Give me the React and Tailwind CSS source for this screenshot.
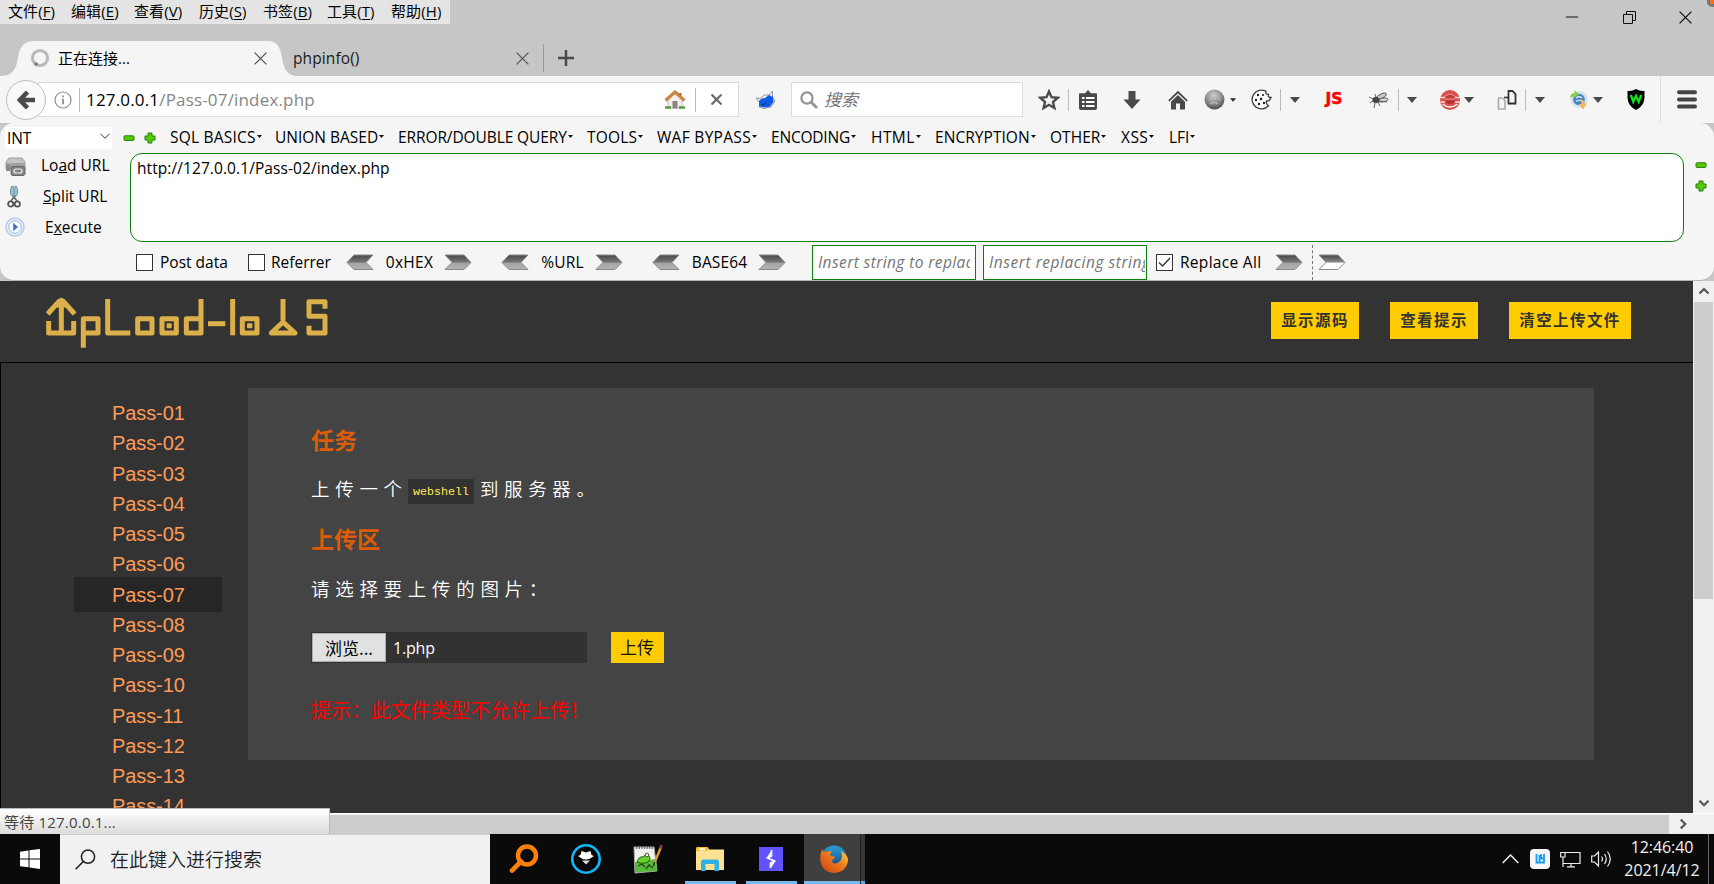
import React from "react";

const UI = "font-['Open_Sans','Noto_Sans_CJK_SC',sans-serif]";

/* ---------- small helpers ---------- */
function Cell({ w, children, className = "" }) {
  return (
    <div className={`flex shrink-0 items-center justify-center ${w} ${className}`}>{children}</div>
  );
}

function Tri({ w = 10, h = 6, color = "#4a4a4a" }) {
  return (
    <svg width={w} height={h} viewBox="0 0 10 6" className="shrink-0">
      <path d="M0 0H10L5 6Z" fill={color} />
    </svg>
  );
}

function CloseX({ size = 13, color = "#555", sw = 1.3 }) {
  return (
    <svg width={size} height={size} viewBox="0 0 13 13">
      <path d="M.6 .6L12.4 12.4M12.4 .6L.6 12.4" stroke={color} strokeWidth={sw} fill="none" />
    </svg>
  );
}

function Minus() {
  return (
    <svg width="12" height="12" viewBox="0 0 12 12">
      <rect x="1" y="3.8" width="10" height="4.6" rx="1" fill="#55cc00" stroke="#2b7d0c" />
    </svg>
  );
}

function Plus() {
  return (
    <svg width="12" height="12" viewBox="0 0 12 12">
      <path d="M4 1H8V4H11V8H8V11H4V8H1V4H4Z" fill="#55cc00" stroke="#2b7d0c" strokeLinejoin="round" />
    </svg>
  );
}

function ArrowDefs() {
  return (
    <svg width="0" height="0" className="absolute">
      <defs>
        <linearGradient id="arrowGray" x1="0" y1="0" x2="0" y2="1">
          <stop offset="0" stopColor="#484848" />
          <stop offset=".5" stopColor="#777" />
          <stop offset=".55" stopColor="#a4a4a4" />
          <stop offset="1" stopColor="#b2b2b2" />
        </linearGradient>
        <linearGradient id="arrowWhite" x1="0" y1="0" x2="0" y2="1">
          <stop offset="0" stopColor="#444" />
          <stop offset=".48" stopColor="#8a8a8a" />
          <stop offset=".56" stopColor="#fff" />
          <stop offset="1" stopColor="#fff" />
        </linearGradient>
      </defs>
    </svg>
  );
}

function Arrow({ left, white }) {
  return (
    <svg width="28" height="17" viewBox="0 0 28 17" className="shrink-0">
      <path
        d={left ? "M27 1H8L1 8.5L8 15.5H27L20 8.5Z" : "M1 1H20L27 8.5L20 15.5H1L8 8.5Z"}
        fill={white ? "url(#arrowWhite)" : "url(#arrowGray)"}
        stroke="#8a8a8a"
      />
    </svg>
  );
}

function Box({ checked }) {
  return (
    <div className="flex size-[17px] shrink-0 items-center justify-center border border-[#333] bg-white">
      {checked && (
        <svg width="13" height="11" viewBox="0 0 13 11">
          <path d="M1 5.5L4.6 9L12 1" stroke="#333" strokeWidth="1.4" fill="none" />
        </svg>
      )}
    </div>
  );
}

/* ---------- title bar with menus and tabs ---------- */
const MENUS = [
  ["文件", "F", "w-[63px]"],
  ["编辑", "E", "w-[63px]"],
  ["查看", "V", "w-[65px]"],
  ["历史", "S", "w-[64px]"],
  ["书签", "B", "w-[64px]"],
  ["工具", "T", "w-[64px]"],
  ["帮助", "H", "w-[59px]"],
];

function TitleBar() {
  return (
    <div className="flex h-[76px] flex-col bg-[#c6c6c6]">
      <div className="flex h-[40px] items-start justify-between">
        <div className="flex h-6 w-[450px] items-center bg-[#e4e4e4] pl-2 text-[15px] text-black">
          {MENUS.map(([t, k, w]) => (
            <div key={k} className={`${w} shrink-0 whitespace-nowrap pb-[2px] leading-[22px] tracking-[0.1px]`}>
              {t}(<span className="underline underline-offset-2">{k}</span>)
            </div>
          ))}
        </div>
        <div className="-mr-px flex h-[34px] items-center">
          <Cell w="w-[58px]">
            <svg width="12" height="2"><path d="M0 1H12" stroke="#111" /></svg>
          </Cell>
          <Cell w="w-[56px]">
            <svg width="13" height="13" viewBox="0 0 13 13" fill="none" stroke="#111">
              <path d="M.5 3.5H9.5V12.5H.5Z M3.5 3.5V.5H12.5V9.5H9.5" />
            </svg>
          </Cell>
          <Cell w="w-[50px]" className="pl-[6px]"><CloseX color="#111" /></Cell>
          <div className="h-[34px] w-[8px]">
            <svg width="7" height="8" viewBox="0 0 7 8">
              <path d="M0 0V3Q1 7 7 7V0Z" fill="#777" />
              <path d="M3 0V4H7V0Z" fill="#f37021" />
            </svg>
          </div>
        </div>
      </div>
      <div className="flex h-[36px]">
        <div className="relative h-[36px] w-[298px]">
          <svg width="298" height="36" viewBox="0 0 298 36" className="absolute inset-0">
            <path
              d="M0 36C12 36 16 30 18 18C20 6 24 1 34 1H267C277 1 280 6 282 18C284 30 288 36 298 36Z"
              fill="#f5f5f5"
            />
          </svg>
          <div className="relative flex h-[36px] items-center text-[15px] text-black">
            <Cell w="w-[22px]" className="ml-[29px]">
              <svg width="20" height="20" viewBox="0 0 20 20">
                <circle cx="10" cy="10" r="7.6" fill="none" stroke="#b9b9b9" strokeWidth="3" />
                <circle cx="6" cy="16" r="1.7" fill="#777" />
              </svg>
            </Cell>
            <div className="ml-[7px] w-[188px]">正在连接...</div>
            <Cell w="w-[28px]"><CloseX /></Cell>
          </div>
        </div>
        <div className="flex items-center text-[15.5px] text-[#1a1a1a]">
          <div className="-ml-[5px] w-[216px] pt-[2px] tracking-[0.1px]">phpinfo()</div>
          <Cell w="w-[26px]"><CloseX /></Cell>
          <div className="ml-[8px] h-[28px] w-px bg-[#999]" />
          <Cell w="w-[44px]">
            <svg width="16" height="16"><path d="M8 0V16M0 8H16" stroke="#4a4a4a" strokeWidth="2.5" /></svg>
          </Cell>
        </div>
      </div>
    </div>
  );
}

/* ---------- navigation bar ---------- */
function Sep({ h = "h-[22px]" }) {
  return <div className={`w-px shrink-0 bg-[#bdbdbd] ${h}`} />;
}

function NavBar() {
  return (
    <div className="flex h-[47px] items-center bg-[#f5f5f5]">
      <div className="relative z-10 ml-[6px] flex size-10 shrink-0 items-center justify-center rounded-full border border-[#bcbcbc] bg-[#fafafa]">
        <svg width="18" height="20" viewBox="0 0 18 20">
          <path d="M10.5 2L3 10L10.5 18M3.5 10H18" stroke="#4a4a4a" strokeWidth="4.6" fill="none" />
        </svg>
      </div>
      <div className="-ml-[8px] flex h-[35px] w-[701px] shrink-0 items-center border border-[#dcdcdc] bg-white pl-[15px]">
        <svg width="18" height="18" viewBox="0 0 18 18" fill="none" stroke="#8f8f8f">
          <circle cx="9" cy="9" r="8" strokeWidth="1.2" />
          <path d="M9 7.8V13.2" strokeWidth="1.8" />
          <path d="M9 4.5V6.3" strokeWidth="1.8" />
        </svg>
        <div className="ml-[7px]"><Sep h="h-[24px]" /></div>
        <div className="ml-[6px] w-[575px] text-[17px] tracking-[0.17px] text-[#858585]">
          <span className="text-black">127.0.0.1</span>/Pass-07/index.php
        </div>
        <Cell w="w-[28px]">
          <svg width="22" height="20" viewBox="0 0 22 20">
            <path d="M4 9.5L11 3L18 9.5V18H4Z" fill="#f1efed" stroke="#aaa" strokeWidth=".7" />
            <path d="M15 3H17.5V7H15Z" fill="#a4693a" />
            <path d="M1.5 10.5L11 2L20.5 10.5" stroke="#c98542" strokeWidth="3.2" fill="none" />
            <rect x="8.5" y="11" width="5" height="7.5" fill="#8c8580" />
            <path d="M1 17.5H7M15 17.5H21" stroke="#4f9e3b" strokeWidth="2.6" />
          </svg>
        </Cell>
        <div className="ml-[6px]"><Sep h="h-[24px]" /></div>
        <Cell w="w-[41px]"><CloseX size={11} color="#6b6b6b" sw={2.6} /></Cell>
      </div>
      <Cell w="w-[52px]">
        <svg width="21" height="20" viewBox="0 0 21 20">
          <path d="M1 8L6 8.5L9 5L14 5L17.5 1L17.5 7L20 11L16 17L9 18.5L4 17L5 13Z" fill="#eceef2" stroke="#8b8f9a" strokeWidth=".9" />
          <path d="M4 11Q6 8 10 8L14 5L18 7L18.5 12L15 16.5Q9 18.5 4 16Z" fill="#0f5be4" />
          <path d="M7 15L11 13.5" stroke="#062a80" strokeWidth="1.2" />
        </svg>
      </Cell>
      <div className="flex h-[35px] w-[232px] shrink-0 items-center border border-[#dcdcdc] bg-white pl-[8px]">
        <svg width="18" height="18" viewBox="0 0 18 18" fill="none" stroke="#929292">
          <circle cx="7" cy="7" r="5.6" strokeWidth="2.2" />
          <path d="M11 11L17 17" strokeWidth="2.8" />
        </svg>
        <span className="ml-[6px] text-[17px] italic text-[#777]">搜索</span>
      </div>
      <Cell w="w-[45px]" className="pl-[6px]">
        <svg width="22" height="22" viewBox="0 0 22 22">
          <path d="M11 2.5L13.5 8.2L19.7 8.8L15 12.9L16.4 19L11 15.8L5.6 19L7 12.9L2.3 8.8L8.5 8.2Z" fill="none" stroke="#4a4a4a" strokeWidth="2.4" />
        </svg>
      </Cell>
      <Sep />
      <Cell w="w-[38px]">
        <svg width="20" height="20" viewBox="0 0 20 20">
          <path d="M7 3.2L10 0L13 3.2H18Q19 3.2 19 4.2V18Q19 20 17 20H3Q1 20 1 18V4.2Q1 3.2 2 3.2Z" fill="#4a4a4a" />
          <path d="M4 8H6.5M8 8H16.5M4 12H6.5M8 12H16.5M4 16H6.5M8 16H16.5" stroke="#fff" strokeWidth="1.8" />
        </svg>
      </Cell>
      <Cell w="w-[50px]">
        <svg width="18" height="20" viewBox="0 0 18 20">
          <path d="M5.5 1H12.5V9.5H17.5L9 19L.5 9.5H5.5Z" fill="#4a4a4a" />
        </svg>
      </Cell>
      <Cell w="w-[41px]">
        <svg width="20" height="20" viewBox="0 0 20 20">
          <path d="M10 5L17 11.7V19.5H12V13.5H8V19.5H3V11.7Z" fill="#4a4a4a" />
          <path d="M.8 10.8L10 2L19.2 10.8" stroke="#4a4a4a" strokeWidth="1.8" fill="none" />
        </svg>
      </Cell>
      <Cell w="w-[30px]" className="pl-[2px]">
        <svg width="21" height="21" viewBox="0 0 21 21">
          <defs>
            <radialGradient id="ball" cx=".45" cy=".3" r=".75">
              <stop offset="0" stopColor="#cfcfcf" />
              <stop offset=".6" stopColor="#858585" />
              <stop offset="1" stopColor="#404040" />
            </radialGradient>
          </defs>
          <circle cx="10.5" cy="10.5" r="10" fill="url(#ball)" />
          <path d="M6 11Q8 7 11 10Q14 6 16 11M6 15Q10 12 14 15" stroke="#b9b9b9" strokeWidth="1.3" fill="none" />
        </svg>
      </Cell>
      <Cell w="w-[10px]"><Tri w={6} h={4} color="#222" /></Cell>
      <Cell w="w-[42px]" className="pl-[5px]">
        <svg width="21" height="21" viewBox="0 0 21 21">
          <path d="M15 2.2A9.4 9.4 0 1 0 17.5 16.8Q14.5 14.5 15.5 12Q18.5 12.5 20 8.5Q16.5 8.5 17.5 5.5Q14 5.5 15 2.2Z" fill="#fff" stroke="#3c3c3c" strokeWidth="1.3" />
          <g fill="#222"><circle cx="7" cy="6" r="1.2" /><circle cx="12" cy="6" r="1.1" /><circle cx="5" cy="11" r="1.2" /><circle cx="10" cy="10" r="1.3" /><circle cx="8" cy="15" r="1.2" /><circle cx="13" cy="14" r="1.2" /></g>
        </svg>
      </Cell>
      <Sep />
      <Cell w="w-[28px]"><Tri /></Cell>
      <Cell w="w-[50px]">
        <span className="pb-px font-['DejaVu_Sans',sans-serif] text-[15.5px] font-bold leading-5 text-[#f00] [-webkit-text-stroke:0.5px_#f00]">JS</span>
      </Cell>
      <Cell w="w-[39px]">
        <svg width="22" height="20" viewBox="0 0 22 20" fill="none" stroke="#444" strokeWidth=".8">
          <ellipse cx="13" cy="6.5" rx="6" ry="2.3" transform="rotate(-28 13 6.5)" fill="#c8c8c8" />
          <ellipse cx="15" cy="10" rx="5" ry="1.8" transform="rotate(-8 15 10)" fill="#ddd" />
          <ellipse cx="8" cy="10" rx="3.3" ry="2.8" fill="#444" />
          <path d="M5 9L1 7M5 11L2 13M7 13L6 18M10 12L12 16M11 11L19 12M8 8L7 4" />
        </svg>
      </Cell>
      <Sep />
      <Cell w="w-[26px]"><Tri /></Cell>
      <Cell w="w-[50px]">
        <svg width="22" height="22" viewBox="0 0 22 22">
          <circle cx="11" cy="11" r="10" fill="#d9504d" />
          <path d="M1.5 8.500H6M16 8.500H20.500M1.500 13H6M16 13H20.500" stroke="#f7dedd" strokeWidth="1.5" />
          <path d="M5.500 8Q11 2.500 16.500 8L15 10H7Z" fill="#c23a3a" stroke="#f0b7b5" strokeWidth=".7" />
          <path d="M6 11.500H16L14.500 14Q11 16 7.500 14Z" fill="#b53030" />
          <path d="M3.5 15Q11 21 18.5 15" stroke="#fff" strokeWidth="1.4" fill="none" />
        </svg>
      </Cell>
      <Cell w="w-[12px]" className="-ml-[12px]"><Tri /></Cell>
      <Cell w="w-[50px]" className="pl-[14px]">
        <svg width="20" height="20" viewBox="0 0 20 20" fill="none">
          <path d="M1.5 8H5L8 10.5V19H1.5Z" stroke="#aaa" strokeWidth="1.6" />
          <path d="M11.5 1H15.5L18.5 4V13.5H11.5Z" stroke="#333" strokeWidth="1.8" />
          <path d="M7 7.5H11" stroke="#333" strokeWidth="1.6" />
        </svg>
      </Cell>
      <div className="w-[5px]" />
      <Sep />
      <Cell w="w-[28px]"><Tri /></Cell>
      <Cell w="w-[48px]" className="pl-[2px]">
        <svg width="20" height="20" viewBox="0 0 20 20">
          <circle cx="10" cy="9.5" r="8.4" fill="#cfe3f5" />
          <circle cx="10" cy="9.5" r="5.8" fill="#4a84bd" />
          <path d="M7 8Q10 5.5 13 8M7 11.5Q10 9 14 12" stroke="#d6e8fa" strokeWidth="1.4" fill="none" />
          <path d="M1 8Q1.5 3 5.5 3V0L10 4L6 7Q3 6 1 8Z" fill="#8bd044" />
          <path d="M11 9.5Q15.500 9 15.5 13.500H18L14 19.500L9.500 14H12.500Q12.500 11 11 9.500Z" fill="#efb860" />
        </svg>
      </Cell>
      <Cell w="w-[12px]" className="-ml-[10px]"><Tri /></Cell>
      <Cell w="w-[48px]" className="ml-[8px]">
        <svg width="18" height="21" viewBox="0 0 18 21">
          <path d="M9 0Q13 2.5 17.5 2V9Q17 17 9 21Q1 17 .5 9V2Q5 2.5 9 0Z" fill="#050505" />
          <path d="M3.8 6L6.3 12.8L9 7L11.7 12.8L14.2 6" stroke="#12e21b" strokeWidth="2.3" fill="none" />
        </svg>
      </Cell>
      <div className="ml-auto mr-[16px] flex h-[47px] items-center border-l border-[#dedede] pl-[16px]">
        <svg width="20" height="19" viewBox="0 0 20 19" className="mr-[3px]">
          <path d="M2 2.2H18M2 9.4H18M2 16.6H18" stroke="#444" strokeWidth="4" strokeLinecap="round" />
        </svg>
      </div>
    </div>
  );
}

/* ---------- hack bar ---------- */
const HACK = [
  ["SQL BASICS", "w-[105px]", "tracking-[0.2px]"],
  ["UNION BASED", "w-[123px]", "tracking-[0px]"],
  ["ERROR/DOUBLE QUERY", "w-[189px]", "tracking-[-0.1px]"],
  ["TOOLS", "w-[70px]", "tracking-[0.2px]"],
  ["WAF BYPASS", "w-[114px]", "tracking-[0.3px]"],
  ["ENCODING", "w-[100px]", "tracking-[-0.2px]"],
  ["HTML", "w-[64px]", "tracking-[0.45px]"],
  ["ENCRYPTION", "w-[115px]", "tracking-[0.05px]"],
  ["OTHER", "w-[71px]", "tracking-[0.05px]"],
  ["XSS", "w-[48px]", "tracking-[0.45px]"],
  ["LFI", "w-[40px]", "tracking-[0px]"],
];

function HackBar() {
  return (
    <div className="h-[158px] bg-[#c6c6c6]">
      <div className="flex h-[158px] flex-col rounded-[14px] border-b border-[#b4b4b4] bg-[#f5f5f5] text-[15.5px] text-black">
        <div className="flex h-[30px] items-center">
          <div className="ml-[5px] flex h-[22px] w-[107px] items-center justify-between bg-white pl-[2px] pr-[2px]">
            <span className="pt-px tracking-[-0.1px]">INT</span>
            <svg width="10" height="7" viewBox="0 0 10 7" className="-mt-[4px]"><path d="M.5 .8L5 5.3L9.5 .8" stroke="#333" fill="none" /></svg>
          </div>
          <Cell w="w-[12px]" className="ml-[11px]"><Minus /></Cell>
          <Cell w="w-[12px]" className="ml-[9px] mr-[14px]"><Plus /></Cell>
          {HACK.map(([t, w, tr]) => (
            <div key={t} className={`flex h-[30px] shrink-0 items-center gap-px whitespace-nowrap ${w}`}>
              <span className={tr}>{t}</span>
              <span className="pb-[3px]"><Tri w={5} h={3} color="#111" /></span>
            </div>
          ))}
        </div>
        <div className="flex h-[89px]">
          <div className="flex w-[130px] flex-col">
            <div className="flex h-[24px] items-center">
              <svg width="21" height="20" viewBox="0 0 21 20" className="ml-[5px] mt-[3px]">
                <path d="M4 1H17L20 5V12H1V5Z" fill="#c4c4c4" stroke="#8b8b8b" strokeWidth=".8" />
                <path d="M1 6H20V12H1Z" fill="#a2a2a2" />
                <path d="M1 8H5V14H1Z" fill="#8a8a8a" />
                <rect x="6" y="9.5" width="14" height="9" rx="2" fill="#858585" stroke="#666" />
                <rect x="9" y="12" width="8" height="4" rx="2" fill="none" stroke="#eee" strokeWidth="1.2" />
              </svg>
              <span className="ml-[15px] pt-[2px]">Lo<u>a</u>d URL</span>
            </div>
            <div className="mt-[7px] flex h-[24px] items-center">
              <svg width="14" height="23" viewBox="0 0 14 23" className="ml-[7px] shrink-0">
                <path d="M5.200 1.500V10L10 16M8.800 1.500V10L4 16" stroke="#555" strokeWidth="1.400" fill="none" />
                <path d="M5 1Q2.500 4 3.500 9L6.300 12.500V1.500ZM9 1Q11.500 4 10.500 9L7.700 12.500V1.500Z" fill="#9cc4d4" stroke="#5d8798" strokeWidth=".8" />
                <circle cx="3.700" cy="19" r="2.600" fill="none" stroke="#555" strokeWidth="1.800" />
                <circle cx="10.300" cy="19" r="2.600" fill="none" stroke="#555" strokeWidth="1.800" />
              </svg>
              <span className="ml-[22px] pt-[2px]"><u>S</u>plit URL</span>
            </div>
            <div className="mt-[7px] flex h-[24px] items-center">
              <svg width="20" height="20" viewBox="0 0 20 20" className="ml-[5px]">
                <circle cx="10" cy="10" r="9" fill="#eaf0fa" stroke="#b9cdea" strokeWidth="1.6" />
                <circle cx="10" cy="10" r="6.3" fill="#f9fbff" stroke="#8fa7ca" strokeWidth=".8" />
                <path d="M8.2 5.8L13 10L8.2 14.2Z" fill="#3a78c8" />
              </svg>
              <span className="ml-[20px] pt-[2px]">E<u>x</u>ecute</span>
            </div>
          </div>
          <div className="w-[1554px] rounded-[12px] border border-[#0c800c] bg-white pl-[6px] pt-[3px] leading-[22px] tracking-[0.08px]">
            http://127.0.0.1/Pass-02/index.php
          </div>
          <div className="flex flex-col pl-[11px] pt-[6px]">
            <Minus />
            <div className="mt-[9px]"><Plus /></div>
          </div>
        </div>
        <div className="flex h-[38px] items-center pl-[136px] pt-[2px]">
          <Box />
          <div className="w-[95px] pl-[7px] pt-[2px]">Post data</div>
          <Box />
          <div className="w-[81px] pl-[6px] pt-[2px]">Referrer</div>
          <Arrow left />
          <Cell w="w-[70px]" className="pl-px pt-px tracking-[0.3px]">0xHEX</Cell>
          <Arrow />
          <div className="w-[29px]" />
          <Arrow left />
          <Cell w="w-[66px]" className="pl-px pt-px tracking-[0.2px]">%URL</Cell>
          <Arrow />
          <div className="w-[29px]" />
          <Arrow left />
          <Cell w="w-[78px]" className="pl-px pt-px tracking-[0.1px]">BASE64</Cell>
          <Arrow />
          <div className="ml-[26px] flex h-[35px] w-[164px] shrink-0 items-center overflow-hidden border border-[#0c800c] bg-white px-[5px]">
            <span className="w-[155px] overflow-hidden whitespace-nowrap pt-[2px] italic tracking-[0.4px] text-[#757575]">Insert string to replace</span>
          </div>
          <div className="ml-[7px] flex h-[35px] w-[164px] shrink-0 items-center overflow-hidden border border-[#0c800c] bg-white pl-[5px]">
            <span className="w-[156px] overflow-hidden whitespace-nowrap pt-[2px] italic tracking-[0.55px] text-[#757575]">Insert replacing string</span>
          </div>
          <div className="w-[9px]" />
          <Box checked />
          <div className="w-[102px] whitespace-nowrap pl-[7px] pt-[2px] tracking-[0.3px]">Replace All</div>
          <Arrow />
          <div className="ml-[9px] h-[35px] border-l border-dashed border-[#777]" />
          <div className="ml-[5px]"><Arrow white /></div>
        </div>
      </div>
    </div>
  );
}

/* ---------- page ---------- */
function Logo() {
  return (
    <svg width="290" height="54" viewBox="130 80 870 162" fill="none" stroke="#dbaf49" strokeWidth="15" strokeLinejoin="round">
      <path d="M144 131L178 93H191L225 131M185 96V188M147 152V188H222V152" />
      <path d="M170 104H200L185 90Z" fill="#dbaf49" />
      <path d="M251 232V145H295V188H251" />
      <path d="M324 86V188H392" />
      <path d="M414 145H457V188H414Z" />
      <path d="M487 145H530V188H487Z" />
      <path d="M604 86V188H560V145H604" />
      <path d="M625 160H677" />
      <path d="M699 86V195" />
      <path d="M728 145H772V188H728Z" />
      <path d="M850 86V150M850 155L815 188H886Z" />
      <path d="M976 115V94H928V138H976V188H928V166" />
      <rect x="501" y="159" width="15" height="15" rx="3" fill="#dbaf49" stroke="none" />
      <rect x="742" y="159" width="16" height="15" rx="3" fill="#dbaf49" stroke="none" />
    </svg>
  );
}

const PASSES = ["01", "02", "03", "04", "05", "06", "07", "08", "09", "10", "11", "12", "13", "14"];

function Page() {
  return (
    <div className="flex h-[532px] w-[1693px] shrink-0 flex-col overflow-hidden bg-[#333]">
      <div className="flex h-[82px] shrink-0 items-start border-b border-black">
        <div className="ml-[43px] mt-[16px] w-[1228px]"><Logo /></div>
        <div className="mt-[21px] flex gap-[31px] font-['Noto_Sans_CJK_SC',sans-serif] text-[15.5px] font-bold tracking-[1.4px] text-[#333]">
          <div className="flex h-[37px] w-[88px] items-center justify-center bg-[#fc0] pb-px">显示源码</div>
          <div className="flex h-[37px] w-[88px] items-center justify-center bg-[#fc0] pb-px">查看提示</div>
          <div className="flex h-[37px] w-[122px] items-center justify-center bg-[#fc0] pb-px">清空上传文件</div>
        </div>
      </div>
      <div className="flex h-[450px] shrink-0 items-start border-l border-black">
        <div className="flex w-[247px] shrink-0 flex-col pl-[73px] pt-[32px] font-['Liberation_Sans',sans-serif] text-[20px] text-[#ff9a57]">
          {PASSES.map((p) => (
            <div
              key={p}
              className={`-mb-[4.75px] flex h-[35px] w-[148px] shrink-0 items-center pl-[38px] pt-px tracking-[-0.1px] ${p === "07" ? "bg-[#262626]" : ""}`}
            >
              Pass-{p}
            </div>
          ))}
        </div>
        <div className="mt-[25px] flex h-[372px] w-[1346px] flex-col bg-[#444] pl-[63px] font-['Noto_Sans_CJK_SC',sans-serif] text-[18.5px] text-white">
          <div className="mt-[36px] h-[30px] text-[23px] font-bold leading-[30px] text-[#df5c06]">任务</div>
          <div className="mt-[22px] flex h-[26px] items-center font-[350]">
            <span className="w-[97px] tracking-[5.7px]">上传一个</span>
            <span className="mt-[5px] flex h-[25px] w-[66px] items-center justify-center bg-[#323232] pt-[2px] font-['Liberation_Mono',monospace] text-[11.7px] font-normal text-[#ffee55]">webshell</span>
            <span className="ml-[6px] tracking-[5.6px]">到服务器。</span>
          </div>
          <div className="mt-[21px] h-[30px] text-[23px] font-bold leading-[30px] text-[#df5c06]">上传区</div>
          <div className="mt-[23px] flex h-[26px] items-center font-[350] tracking-[5.7px]">请选择要上传的图片：</div>
          <div className="mt-[30px] flex h-[31px] items-center">
            <div className="flex h-[31px] w-[276px] items-center bg-[#323232] pl-px">
              <div className="flex h-[29px] w-[74px] items-center justify-center border border-[#adadad] bg-[#e1e1e1] text-[17px] text-black">浏览...</div>
              <div className="pl-[7px] font-['Open_Sans',sans-serif] text-[16px] tracking-[-0.2px]">1.php</div>
            </div>
            <div className="ml-[24px] flex h-[31px] w-[53px] items-center justify-center bg-[#fc0] pb-px pr-px text-[17px] text-[#111]">上传</div>
          </div>
          <div className="mt-[32px] h-[30px] text-[20px] leading-[30px] tracking-[-0.1px] text-[#f00]">提示：此文件类型不允许上传！</div>
        </div>
      </div>
    </div>
  );
}

function Chevron({ dir }) {
  const d = { up: "M2 10L8 4L14 10", down: "M2 5L8 11L14 5", right: "M5 2L11 8L5 14" }[dir];
  return (
    <svg width="12" height="12" viewBox="0 0 16 16"><path d={d} stroke="#555" strokeWidth="3" fill="none" /></svg>
  );
}

function Viewport() {
  return (
    <div className="relative flex h-[553px] flex-col bg-[#f0f0f0]">
      <div className="flex h-[532px]">
        <Page />
        <div className="flex w-[21px] flex-col items-center justify-between bg-[#f0f0f0]">
          <div className="flex h-[21px] items-center"><Chevron dir="up" /></div>
          <div className="h-[297px] w-[19px] bg-[#cdcdcd]" />
          <div className="grow" />
          <div className="flex h-[21px] items-center"><Chevron dir="down" /></div>
        </div>
      </div>
      <div className="flex h-[21px] items-center border-t border-[#fff]">
        <div className="h-[19px] w-[1669px] bg-[#cdcdcd]" />
        <Cell w="w-[27px]"><Chevron dir="right" /></Cell>
      </div>
      <div className="absolute bottom-0 left-0 flex h-[26px] w-[330px] items-center border-r border-t border-[#b8b8b8] bg-linear-to-b from-white to-[#dcdcdc] pl-[4px] pt-px text-[15px] tracking-[0.2px] text-[#444]">
        等待 127.0.0.1...
      </div>
    </div>
  );
}

/* ---------- task bar ---------- */
function TaskIcon({ w, bar, active, children }) {
  return (
    <div className={`flex h-[50px] shrink-0 flex-col items-center ${w} ${active ? "bg-[#3f3f3f]" : ""}`}>
      <div className={`flex h-[47px] items-center justify-center pt-[3px] ${bar ? "pr-px" : ""}`}>{children}</div>
      <div className={`h-[3px] ${bar ? "bg-[#76b9ed]" : ""} ${active ? "w-full" : "w-[51px]"}`} />
    </div>
  );
}

function TaskBar() {
  return (
    <div className="flex h-[50px] bg-[#0a0a0a]">
      <Cell w="w-[60px]">
        <svg width="20" height="20" viewBox="0 0 20 20" fill="#fff">
          <path d="M0 2.8L8.5 1.5V9.4H0ZM9.5 1.3L20 0V9.4H9.5ZM0 10.4H8.5V18.3L0 17.2ZM9.5 10.4H20V20L9.5 18.5Z" />
        </svg>
      </Cell>
      <div className="flex w-[430px] items-center border-t border-[#ccc] bg-[#f1f1f1] pl-[15px]">
        <svg width="21" height="21" viewBox="0 0 21 21" fill="none" stroke="#222" strokeWidth="1.5">
          <circle cx="13" cy="7.7" r="6.6" />
          <path d="M8.2 12.6L.6 20.2" />
        </svg>
        <span className="ml-[14px] font-['Noto_Sans_CJK_SC',sans-serif] text-[19px] font-[350] text-[#222]">在此键入进行搜索</span>
      </div>
      <TaskIcon w="w-[68px]">
        <svg width="30" height="30" viewBox="0 0 30 30" fill="none" stroke="#ff8104">
          <circle cx="18" cy="11.5" r="9" strokeWidth="4.4" />
          <path d="M12 17.5L3 26.5" strokeWidth="4.6" strokeLinecap="round" />
        </svg>
      </TaskIcon>
      <TaskIcon w="w-[56px]">
        <svg width="30" height="30" viewBox="0 0 30 30">
          <circle cx="15" cy="15" r="13.7" fill="#060606" stroke="#12b7fa" strokeWidth="2.6" />
          <path d="M10.500 7L15 8.500L19.500 7L20.500 11L23 12Q19 15.500 15 15.500Q11 15.500 7 12L9.500 11Z" fill="#fff" />
          <path d="M11 16.500H19L15 20.500Z" fill="#ddd" />
        </svg>
      </TaskIcon>
      <TaskIcon w="w-[68px]">
        <svg width="30" height="30" viewBox="0 0 30 30">
          <path d="M1 3H21L24 27L2 29Z" fill="#f0f0ec" stroke="#aaa" />
          <path d="M2 18L23 15L24 27L2 28.5Z" fill="#57b93a" />
          <path d="M3 4H21" stroke="#777" strokeWidth="2" strokeDasharray="1.4 1.2" />
          <path d="M4 18Q6 12 10 13Q12 10 15 11Q19 14 15 18Q11 20 7 19Z" fill="#66d22b" stroke="#245e1a" />
          <circle cx="14" cy="11" r="1.8" fill="#e8f7de" stroke="#333" strokeWidth=".8" />
          <path d="M5 22L9 20L12 23M13 25L16 21L20 24" stroke="#263f1e" strokeWidth="1.3" fill="none" />
          <path d="M28 3L21 20" stroke="#d69e2e" strokeWidth="2.4" />
          <path d="M28.5 1L27.5 4.5" stroke="#8c3c31" strokeWidth="2.4" />
          <path d="M21.5 18L20.5 22" stroke="#222" strokeWidth="1.4" />
        </svg>
      </TaskIcon>
      <TaskIcon w="w-[57px]" bar>
        <svg width="28" height="24" viewBox="0 0 28 24">
          <path d="M0 2Q0 0 2 0H11L13.5 2.5H28V23H0Z" fill="#ffe192" />
          <path d="M0 4V2Q0 0 2 0H11L13 2.3L11 4Z" fill="#f6bf2c" />
          <rect x="3" y="1.3" width="6" height="2" fill="#fff" />
          <path d="M5 24V15Q5 12.5 7.5 12.5H20.5Q23 12.5 23 15V24H18.5V17H9.5V24Z" fill="#31b0e4" />
        </svg>
      </TaskIcon>
      <TaskIcon w="w-[65px]" bar>
        <svg width="24" height="24" viewBox="0 0 24 24">
          <rect width="24" height="24" fill="#6153ff" />
          <path d="M12.500 3V9L8.500 11L15.500 14L11.500 16V21M12.500 5L8.500 11M15.500 14L11.500 20" stroke="#fff" strokeWidth="1.7" fill="none" />
        </svg>
      </TaskIcon>
      <TaskIcon w="w-[56px]" bar active>
        <svg width="28" height="28" viewBox="0 0 28 28" className="translate-x-[2px]">
          <defs>
            <linearGradient id="foxTail" x1="0" y1="1" x2="1" y2="0">
              <stop offset="0" stopColor="#cc3e12" />
              <stop offset=".55" stopColor="#ee7b1b" />
              <stop offset="1" stopColor="#ffe14b" />
            </linearGradient>
            <linearGradient id="foxGlobe" x1="0" y1="0" x2="0" y2="1">
              <stop offset="0" stopColor="#2b9ed6" />
              <stop offset="1" stopColor="#143d75" />
            </linearGradient>
          </defs>
          <circle cx="14" cy="13" r="12.6" fill="url(#foxGlobe)" />
          <path d="M2 4Q3 7 6 7Q9 5 12 7Q9 9 11 11Q15 11 15 13Q12 14 12 17Q15 20 19 17Q24 13 21 6Q28 10 28 15Q27 27 14 28Q1 27 .3 14Q.3 8 2 4Z" fill="url(#foxTail)" />
        </svg>
      </TaskIcon>
      <div className="flex h-[50px] w-[5px] flex-col justify-end border-l border-[#222] bg-[#383838]">
        <div className="h-[3px] bg-[#6aa6d5]" />
      </div>
      <div className="ml-auto flex items-center">
        <Cell w="w-[32px]">
          <svg width="17" height="10" viewBox="0 0 17 10"><path d="M.7 9L8.5 1L16.3 9" stroke="#eee" strokeWidth="1.5" fill="none" /></svg>
        </Cell>
        <Cell w="w-[28px]">
          <svg width="20" height="20" viewBox="0 0 20 20">
            <rect width="20" height="20" rx="4" fill="#f5f7f9" />
            <path d="M6.500 5V13.500H9.500V6M11 5V9.500H14V5M14 9V13.500H9.500" stroke="#169cf5" strokeWidth="1.8" fill="none" />
          </svg>
        </Cell>
        <Cell w="w-[32px]">
          <svg width="21" height="18" viewBox="0 0 21 18" fill="none" stroke="#eee" strokeWidth="1.2">
            <path d="M5 2.5H20V13.5H3.5M11 13.5V16.5M7 16.8H15M.7 2.5H5V7H.7ZM3 7V17" />
          </svg>
        </Cell>
        <Cell w="w-[30px]">
          <svg width="21" height="18" viewBox="0 0 21 18" fill="none" stroke="#eee" strokeWidth="1.2">
            <path d="M.7 6H3.5L7.5 2V16L3.5 12H.7ZM10.5 6.5Q12.5 9 10.5 11.5M13.5 4Q17 9 13.5 14M16.5 1.5Q22 9 16.5 16.5" />
          </svg>
        </Cell>
        <div className="flex w-[92px] flex-col items-center font-['Open_Sans',sans-serif] text-[16px] leading-[23px] text-[#f2f2f2]">
          <span className="tracking-[-0.1px]">12:46:40</span>
          <span className="tracking-[-0.05px]">2021/4/12</span>
        </div>
        <div className="h-[50px] w-[6px] border-l border-[#666]" />
      </div>
    </div>
  );
}

export default function App() {
  return (
    <div className={`flex h-[884px] w-[1714px] flex-col overflow-hidden ${UI}`}>
      <ArrowDefs />
      <TitleBar />
      <NavBar />
      <HackBar />
      <Viewport />
      <TaskBar />
    </div>
  );
}
